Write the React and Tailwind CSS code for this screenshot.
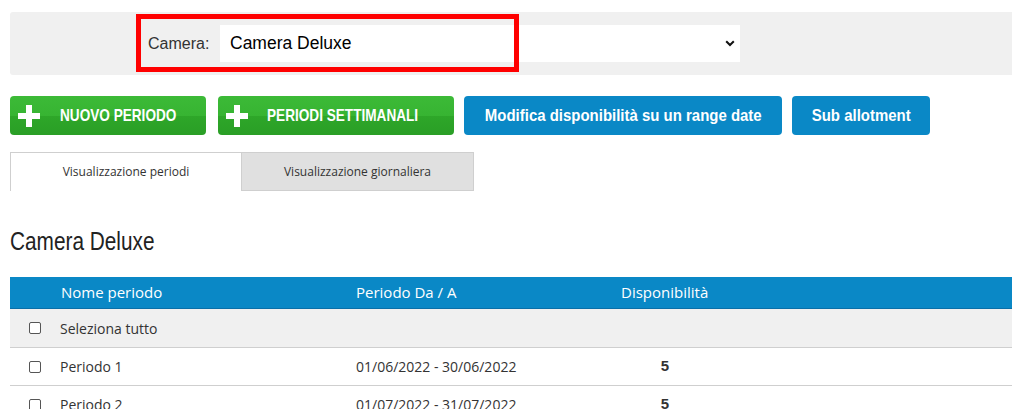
import React from "react";

const gothic = { fontFamily: '"Century Gothic", "Open Sans", "DejaVu Sans", sans-serif' };
const arial = { fontFamily: '"Liberation Sans", Arial, sans-serif' };

function Plus() {
  return (
    <svg width="22" height="22" viewBox="0 0 22 22" className="shrink-0">
      <rect x="8" y="0" width="6" height="22" fill="#fff" />
      <rect x="0" y="8" width="22" height="6" fill="#fff" />
    </svg>
  );
}

function Chevron() {
  return (
    <svg width="10" height="7" viewBox="0 0 10 7">
      <path d="M1.2 1.2 L5 5 L8.8 1.2" fill="none" stroke="#111" strokeWidth="2" />
    </svg>
  );
}

function Checkbox() {
  return <div className="w-[12px] h-[12px] rounded-[2px] border border-[#555] bg-white" />;
}

const rows = [
  { name: "Periodo 1", dates: "01/06/2022 - 30/06/2022", disp: "5" },
  { name: "Periodo 2", dates: "01/07/2022 - 31/07/2022", disp: "5" },
];

const greenBg = "bg-[linear-gradient(#3cba37_0%,#37b432_50%,#2ea729_50%,#2a9e26_100%)]";

export default function App() {
  return (
    <div className="w-[1012px] h-[409px] overflow-hidden bg-white pl-[10px] pt-[12px]">
      {/* top panel */}
      <div className="relative h-[63px] bg-[#f0f0f0] rounded-l-[3px] flex items-center pl-[138px]">
        <span className="text-[16px] text-[#333] w-[72px]" style={arial}>Camera:</span>
        <div className="w-[520px] h-[37px] bg-white flex items-center justify-between pl-[10px] pr-[5px]">
          <span className="text-[17.5px] text-black" style={arial}>Camera Deluxe</span>
          <Chevron />
        </div>
        <div className="absolute left-[126px] top-[2px] w-[383px] h-[58px] border-[5px] border-[#ff0000] pointer-events-none" />
      </div>

      {/* buttons */}
      <div className="mt-[21px] flex h-[39px] text-white font-bold text-[17px] whitespace-nowrap" style={arial}>
        <div className={`w-[196px] rounded-[4px] flex items-center pl-[8px] overflow-hidden ${greenBg}`}>
          <Plus />
          <span className="ml-[20px] inline-block scale-x-[0.8] origin-left">NUOVO PERIODO</span>
        </div>
        <div className={`ml-[12px] w-[236px] rounded-[4px] flex items-center pl-[8px] overflow-hidden ${greenBg}`}>
          <Plus />
          <span className="ml-[19px] inline-block scale-x-[0.8] origin-left">PERIODI SETTIMANALI</span>
        </div>
        <div className="ml-[10px] w-[318px] rounded-[4px] flex items-center justify-center bg-[#0a88c6] overflow-hidden">
          <span className="inline-block scale-x-[0.88] origin-center">Modifica disponibilità su un range date</span>
        </div>
        <div className="ml-[10px] w-[138px] rounded-[4px] flex items-center justify-center bg-[#0a88c6] overflow-hidden">
          <span className="inline-block scale-x-[0.88] origin-center">Sub allotment</span>
        </div>
      </div>

      {/* tabs */}
      <div className="mt-[17px] flex h-[39px] text-[12px] text-[#333]" style={gothic}>
        <div className="w-[232px] border-l border-t border-r border-[#cfcfcf] bg-white flex items-center justify-center">
          Visualizzazione periodi
        </div>
        <div className="w-[232px] border-t border-r border-b border-[#cfcfcf] bg-[#e0e0e0] flex items-center justify-center">
          Visualizzazione giornaliera
        </div>
      </div>

      {/* heading */}
      <div className="mt-[35px] h-[30px] text-[26px] leading-[30px] text-[#222] whitespace-nowrap" style={arial}>
        <span className="inline-block scale-x-[0.8] origin-left">Camera Deluxe</span>
      </div>

      {/* table */}
      <div className="mt-[21px]" style={gothic}>
        <div className="h-[32px] bg-[#0a88c6] border-b border-[#0a6fa8] flex items-center text-white text-[15px]">
          <div className="w-[51px]" />
          <div className="w-[295px]">Nome periodo</div>
          <div className="w-[265px]">Periodo Da / A</div>
          <div>Disponibilità</div>
        </div>
        <div className="h-[39px] bg-[#f0f0f0] border-b border-[#cfcfcf] flex items-center text-[14px] text-[#333]">
          <div className="w-[50px] flex justify-center"><Checkbox /></div>
          <div>Seleziona tutto</div>
        </div>
        {rows.map((r) => (
          <div key={r.name} className="h-[38px] bg-white border-b border-[#cfcfcf] flex items-center text-[14px] text-[#333]">
            <div className="w-[50px] flex justify-center"><Checkbox /></div>
            <div className="w-[296px]">{r.name}</div>
            <div className="w-[265px]">{r.dates}</div>
            <div className="w-[88px] text-center font-bold text-[15px]" style={arial}>{r.disp}</div>
          </div>
        ))}
      </div>
    </div>
  );
}
